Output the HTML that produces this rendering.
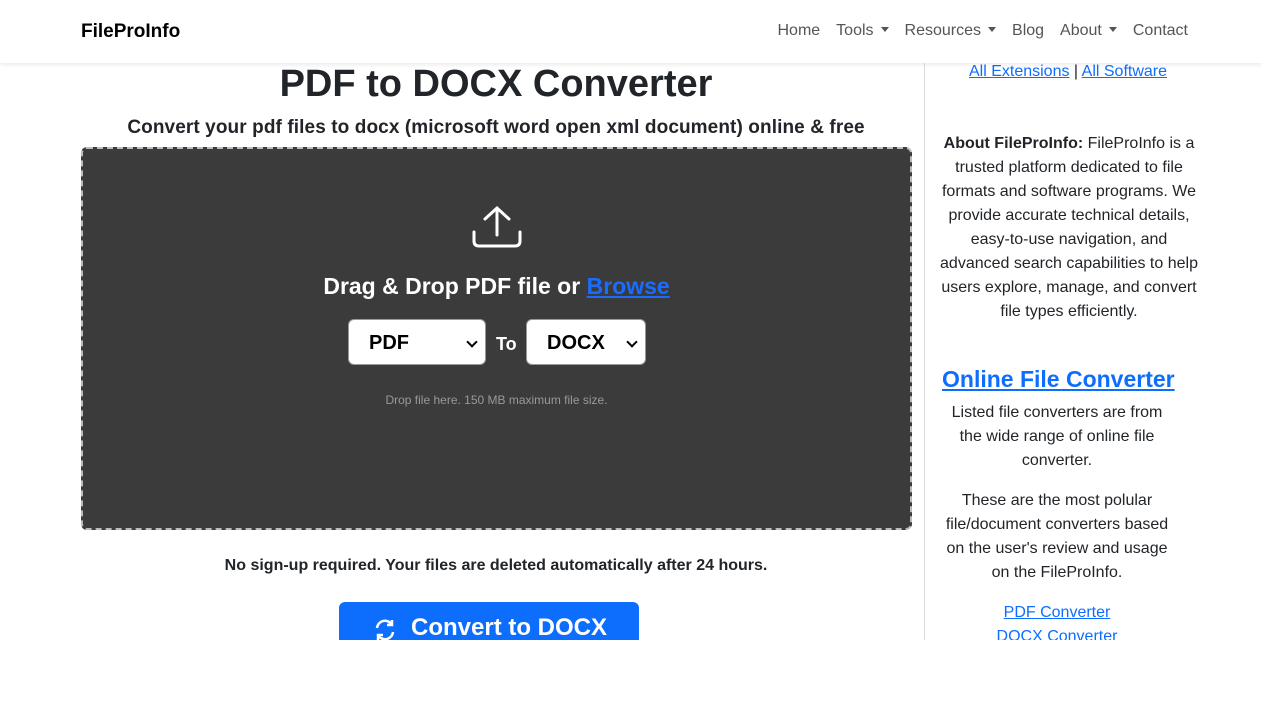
<!DOCTYPE html>
<html><head><style>
*{box-sizing:border-box;margin:0;padding:0}
body{width:1262px;height:728px;overflow:hidden;background:#fff;font-family:"Liberation Sans",sans-serif;color:#212529;position:relative}
.nav{position:absolute;top:0;left:0;width:1262px;height:63px;background:#fff;box-shadow:0 2px 4px rgba(0,0,0,.08);z-index:2}
.brand{position:absolute;left:81px;top:21px;font-weight:bold;font-size:19px;color:#000}
.menu{position:absolute;right:74px;top:22px;font-size:16px;color:#555;display:flex;gap:16px}
.car:after{content:"";display:inline-block;margin-left:7px;vertical-align:3px;border-top:5px solid #555;border-left:4px solid transparent;border-right:4px solid transparent}
.clip{position:absolute;top:0;left:0;width:1262px;height:640px;overflow:hidden}
h1{position:absolute;left:81px;width:830px;top:63px;text-align:center;font-size:38px;font-weight:bold}
.sub{position:absolute;left:81px;width:830px;top:117px;text-align:center;font-size:19px;font-weight:bold;letter-spacing:.1px}
.drop{position:absolute;left:81px;top:147px;width:831px;height:383px;background:#3b3b3b;border:2px dashed #bbb;border-radius:6px}
.dd{position:absolute;left:0;width:100%;top:124px;text-align:center;color:#fff;font-size:23px;font-weight:bold}
.dd a{color:#1a6cff;text-decoration:underline}
.sel{position:absolute;top:170px;height:46px;background:#fff;border-radius:6px;font-size:20px;font-weight:bold;color:#000;padding:12px 0 0 20px;border:1px solid #999}
.sel:after{content:"";position:absolute;right:9px;top:18px;width:6px;height:6px;border-right:2px solid #000;border-bottom:2px solid #000;transform:rotate(45deg)}
.to{position:absolute;left:413px;top:185px;color:#fff;font-weight:bold;font-size:18px}
.hint{position:absolute;left:0;width:100%;top:244px;text-align:center;font-size:12px;color:#999}
.note{position:absolute;left:81px;width:830px;top:557px;text-align:center;font-size:16px;font-weight:bold}
.btn{position:absolute;left:339px;top:602px;width:300px;height:60px;background:#0d6efd;border-radius:6px;color:#fff;font-weight:bold;font-size:24px;padding:12px 0 0 72px}
.side{position:absolute;left:924px;top:63px;width:1px;height:577px;background:#ddd}
.sb{position:absolute;text-align:center;font-size:16px;line-height:24px}
.sb a{color:#0d6efd;text-decoration:underline}
</style></head><body>
<div class="clip">
<h1>PDF to DOCX Converter</h1>
<div class="sub">Convert your pdf files to docx (microsoft word open xml document) online &amp; free</div>
<div class="drop">
<svg style="position:absolute;left:388px;top:56px" width="52" height="44" viewBox="0 0 52 44" fill="none" stroke="#fff" stroke-width="3" stroke-linecap="round"><path d="M26 30V3M14 14L26 3 38 14M3 27v9q0 5 5 5h36q5 0 5-5v-9"/></svg>
<div class="dd">Drag &amp; Drop PDF file or <a>Browse</a></div>
<div class="sel" style="left:265px;width:138px">PDF</div>
<div class="to">To</div>
<div class="sel" style="left:443px;width:120px">DOCX</div>
<div class="hint">Drop file here. 150 MB maximum file size.</div>
</div>
<div class="note">No sign-up required. Your files are deleted automatically after 24 hours.</div>
<div class="btn"><svg style="position:absolute;left:34px;top:16px" width="24" height="24" viewBox="0 0 24 24" fill="none" stroke="#fff" stroke-width="2.5"><path d="M4 10a8 8 0 0 1 15-3M20 14a8 8 0 0 1-15 3"/><path d="M19 2v5h-5M5 22v-5h5"/></svg>Convert to DOCX</div>
<div class="side"></div>
<div class="sb" style="top:60px;left:936px;width:264px"><a>All Extensions</a> | <a>All Software</a></div>
<div class="sb" style="top:132px;left:936px;width:266px;font-size:16px"><b>About FileProInfo:</b> FileProInfo is a trusted platform dedicated to file formats and software programs. We provide accurate technical details, easy-to-use navigation, and advanced search capabilities to help users explore, manage, and convert file types efficiently.</div>
<div class="sb" style="top:365px;text-align:left;left:942px;font-size:23px;line-height:28px;font-weight:bold"><a>Online File Converter</a></div>
<div class="sb" style="top:401px;left:942px;width:230px">Listed file converters are from the wide range of online file converter.</div>
<div class="sb" style="top:489px;left:942px;width:230px">These are the most polular file/document converters based on the user's review and usage on the FileProInfo.</div>
<div class="sb" style="top:601px;left:942px;width:230px"><a>PDF Converter</a><br><a>DOCX Converter</a></div>
</div>
<div class="nav"><div class="brand">FileProInfo</div>
<div class="menu"><span>Home</span><span class="car">Tools</span><span class="car">Resources</span><span>Blog</span><span class="car">About</span><span>Contact</span></div></div>
</body></html>
